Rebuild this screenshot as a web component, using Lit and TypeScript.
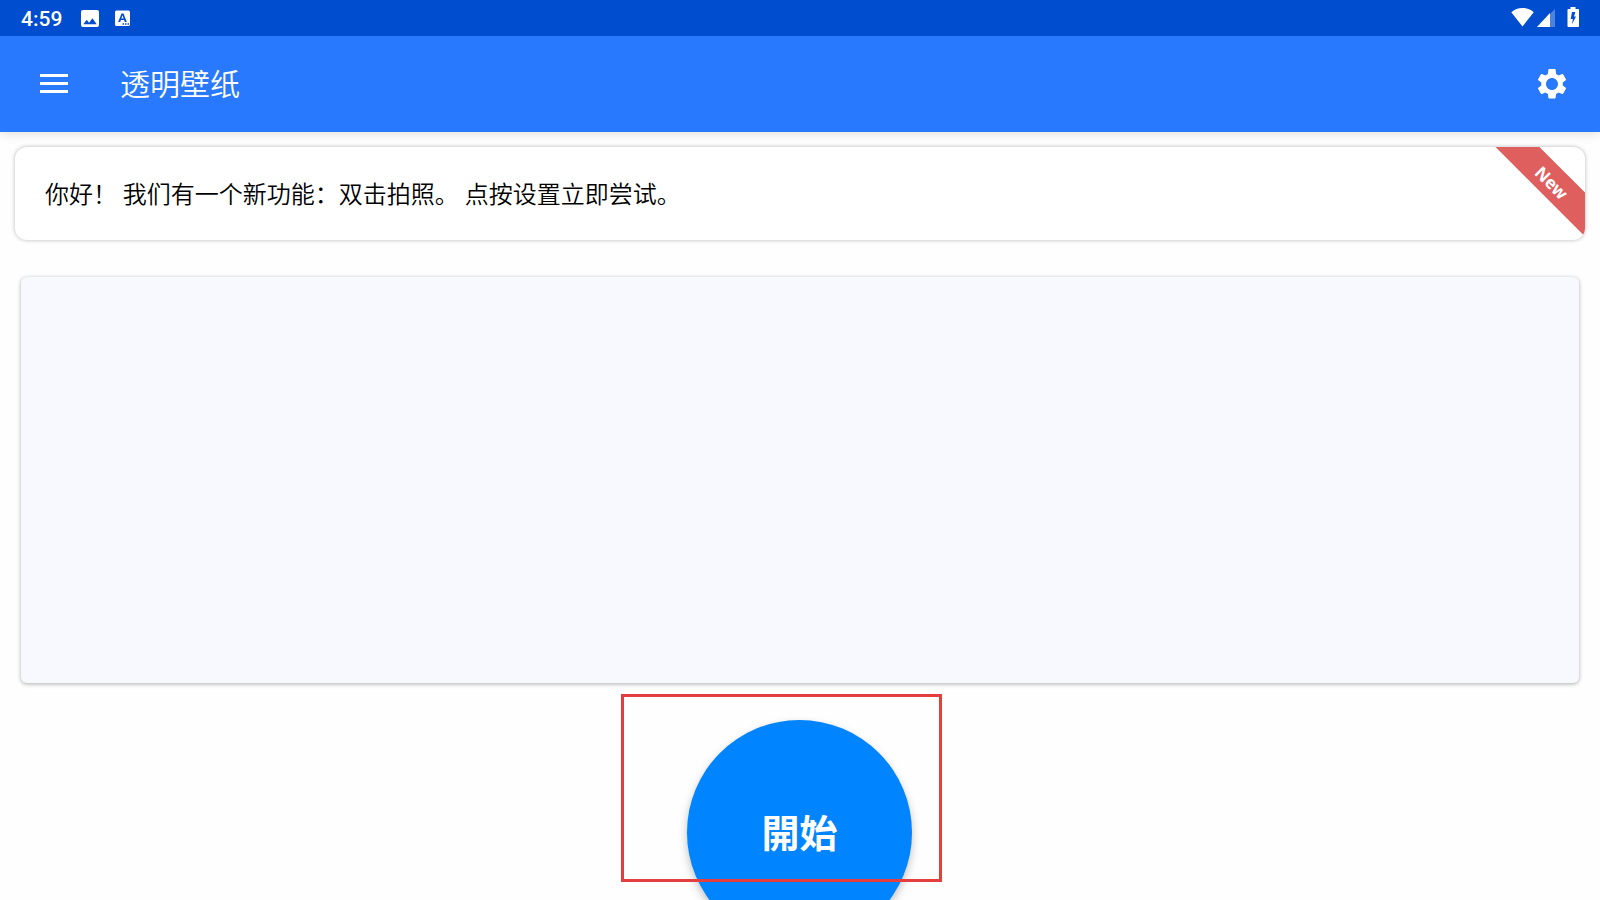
import { LitElement, html, css } from "lit";
import { customElement, property } from "lit/decorators.js";

@customElement("status-bar")
class StatusBar extends LitElement {
  @property() time = "";

  static styles = css`
    :host {
      display: flex;
      align-items: center;
      justify-content: space-between;
      height: 36px;
      padding: 0 21px;
      background: #004ecf;
      color: #fff;
      font: 500 21px/36px Roboto, sans-serif;
      position: relative;
      z-index: 2;
    }
    .group {
      display: flex;
      align-items: center;
    }
    .time {
      margin-right: 19px;
      line-height: 34px;
      padding-top: 2px;
    }
    svg {
      display: block;
      height: 20px;
      fill: #fff;
    }
    .picture {
      margin-right: 16px;
    }
    .wifi {
      margin-right: 3px;
    }
    .signal {
      margin-right: 12px;
    }
    .status {
      padding-bottom: 2px;
    }
  `;

  render() {
    return html`
      <div class="group">
        <span class="time">${this.time}</span>
        <svg class="picture" width="18" viewBox="0 0 18 20" aria-hidden="true">
          <path fill-rule="evenodd" d="M2 2h14a2 2 0 0 1 2 2v13a2 2 0 0 1-2 2H2a2 2 0 0 1-2-2V4a2 2 0 0 1 2-2zM2.300 16.300h13.400l-4.300-6-3.300 4.400-2.400-2.900z" />
        </svg>
        <svg width="15" viewBox="0 0 15 20" aria-hidden="true">
          <path fill-rule="evenodd" d="M1.500 2.500h12A1.500 1.500 0 0 1 15 4v12.500a1.500 1.500 0 0 1-1.500 1.500h-12A1.500 1.500 0 0 1 0 16.500V4a1.500 1.500 0 0 1 1.500-1.500zM3.200 14h2l.7-2h3.200l.7 2h2L8.500 5.500h-2zM6.400 10.400l1.100-3.100 1.100 3.100zM7.500 15.300v1.400H9v-1.400zM10 15.300v1.400h1.500v-1.400zM12.500 15.300v1.400H14v-1.400z" />
        </svg>
      </div>
      <div class="group status">
        <svg class="wifi" width="23" viewBox="0 0 23 20" aria-hidden="true">
          <path d="M11.500 19.500 0.300 5.200C3.300 2.500 7.200 1 11.500 1s8.200 1.500 11.200 4.200z" />
        </svg>
        <svg class="signal" width="18" viewBox="0 0 18 20" aria-hidden="true">
          <path fill-opacity=".3" d="M0 20 18 2v18z" />
          <path d="M0 20 13 6v14z" />
        </svg>
        <svg width="12" viewBox="0 0 12 20" aria-hidden="true">
          <path fill-rule="evenodd" d="M3.500 0h5v2H11c.6 0 1 .4 1 1v16c0 .6-.4 1-1 1H1.500c-.6 0-1-.4-1-1V3c0-.6.4-1 1-1h2zM5 5l-1.300 7h2.200l-.9 5.300L9 9.500H7L8.300 5z" />
        </svg>
      </div>
    `;
  }
}

@customElement("app-bar")
class AppBar extends LitElement {
  @property() heading = "";

  static styles = css`
    :host {
      display: flex;
      align-items: center;
      height: 96px;
      padding: 0 24px;
      background: #2979ff;
      color: #fff;
      box-shadow: 0 2px 10px rgba(0, 0, 0, 0.12);
      z-index: 1;
    }
    button {
      display: flex;
      justify-content: center;
      width: 60px;
      padding: 12px 0;
      border: 0;
      background: none;
      color: inherit;
    }
    svg {
      display: block;
      fill: currentColor;
    }
    h1 {
      flex: 1;
      margin: 0 0 0 36px;
      padding-bottom: 4px;
      font: 350 30px/44px "Noto Sans CJK SC", sans-serif;
    }
    .settings {
      margin-right: -6px;
    }
  `;

  render() {
    return html`
      <button type="button" aria-label="菜单">
        <svg width="36" height="36" viewBox="0 0 36 36"><path d="M4 8h28v3H4zM4 16h28v3H4zM4 24h28v3H4z" /></svg>
      </button>
      <h1>${this.heading}</h1>
      <button class="settings" type="button" aria-label="设置">
        <svg width="36" height="36" viewBox="0 0 24 24">
          <path d="M19.140 12.940c.040-.300.060-.610.060-.940 0-.320-.020-.640-.070-.940l2.030-1.580c.180-.140.230-.410.120-.610l-1.920-3.320c-.120-.220-.370-.290-.590-.220l-2.390.960c-.500-.380-1.030-.700-1.620-.940L14.400 2.410c-.040-.240-.240-.410-.480-.410h-3.840c-.240 0-.430.170-.470.410L9.250 5.350c-.590.240-1.130.570-1.620.940l-2.390-.960c-.220-.080-.470 0-.590.220L2.740 8.870c-.120.210-.080.470.120.610l2.030 1.580c-.050.300-.090.630-.090.940s.020.640.070.940l-2.030 1.580c-.180.140-.230.410-.120.610l1.920 3.320c.120.220.370.290.590.220l2.390-.960c.500.380 1.030.700 1.620.940l.360 2.540c.050.240.240.410.480.410h3.840c.240 0 .440-.170.470-.410l.360-2.540c.590-.240 1.130-.560 1.620-.940l2.390.960c.220.080.470 0 .590-.220l1.920-3.320c.120-.220.070-.470-.120-.610l-2.010-1.580zM12 16c-2.200 0-4-1.800-4-4s1.800-4 4-4 4 1.800 4 4-1.800 4-4 4z" />
        </svg>
      </button>
    `;
  }
}

@customElement("notice-card")
class NoticeCard extends LitElement {
  @property() badge = "";

  static styles = css`
    :host {
      display: block;
      position: relative;
      overflow: hidden;
      padding: 30px 30px 27px;
      border-radius: 12px;
      background: #fff;
      box-shadow: 0 0 4px rgba(0, 0, 0, 0.28);
      color: #000;
      font: 350 24px/36px Roboto, "Noto Sans CJK SC", sans-serif;
    }
    .ribbon {
      position: absolute;
      top: 18px;
      right: -36px;
      box-sizing: border-box;
      width: 140px;
      padding: 2px 0 0 4px;
      background: #df5e5e;
      color: #fff;
      font: 700 17px/29px "Noto Sans", sans-serif;
      text-align: center;
      transform: rotate(45deg);
    }
  `;

  render() {
    return html`<slot></slot><span class="ribbon">${this.badge}</span>`;
  }
}

@customElement("app-root")
class AppRoot extends LitElement {
  static styles = css`
    :host {
      display: flex;
      flex-direction: column;
      height: 100vh;
      overflow: hidden;
      background: #fefefe;
    }
    main {
      display: flex;
      flex: 1;
      flex-direction: column;
      min-height: 0;
      padding: 15px 15px 0;
    }
    .preview {
      flex: 1;
      margin: 37px 6px;
      border-radius: 6px;
      background: #f8f9fe;
      box-shadow: 0 1px 4px rgba(0, 0, 0, 0.32);
    }
    .action {
      position: relative;
      display: flex;
      justify-content: center;
      height: 180px;
    }
    .start {
      flex: none;
      width: 225px;
      height: 225px;
      margin-right: 1px;
      padding: 0 0 4px;
      border: 0;
      border-radius: 50%;
      background: #0084ff;
      box-shadow: 0 4px 9px rgba(0, 0, 0, 0.25);
      color: #fff;
      font: 700 38px/54px "Noto Sans CJK TC", sans-serif;
    }
    .highlight {
      position: absolute;
      top: -26px;
      left: calc(50% - 179px);
      box-sizing: border-box;
      width: 321px;
      height: 188px;
      border: 3px solid #e53e3e;
      pointer-events: none;
    }
  `;

  render() {
    return html`
      <status-bar time="4:59"></status-bar>
      <app-bar heading="透明壁纸"></app-bar>
      <main>
        <notice-card badge="New">你好！ 我们有一个新功能：双击拍照。 点按设置立即尝试。</notice-card>
        <section class="preview"></section>
        <div class="action">
          <button class="start" type="button">開始</button>
          <div class="highlight"></div>
        </div>
      </main>
    `;
  }
}
